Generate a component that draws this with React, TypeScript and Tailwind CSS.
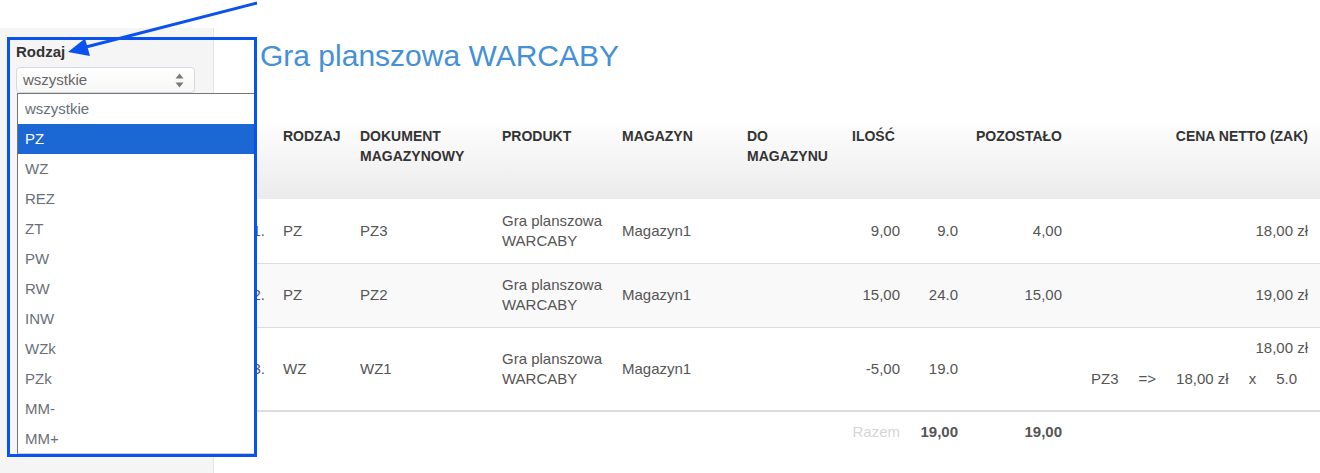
import React from "react";

const OPTIONS = ["wszystkie", "PZ", "WZ", "REZ", "ZT", "PW", "RW", "INW", "WZk", "PZk", "MM-", "MM+"];

function Th({ children, className = "", colSpan }: { children?: React.ReactNode; className?: string; colSpan?: number }) {
  return (
    <th
      colSpan={colSpan}
      className={
        "h-[82px] align-top pt-[9px] px-[8px] text-[14px] leading-[20px] font-bold text-[#333] uppercase bg-linear-to-b from-white to-[#ebebeb] " +
        className
      }
    >
      {children}
    </th>
  );
}

function Product() {
  return (
    <>
      Gra planszowa
      <br />
      WARCABY
    </>
  );
}

export default function App() {
  return (
    <div className="relative w-[1320px] h-[473px] overflow-hidden bg-white font-['Liberation_Sans',Arial,sans-serif]">
      <div className="flex flex-col h-full">
        <div className="h-[28px] shrink-0" />
        <div className="flex flex-1">
          {/* Sidebar */}
          <aside className="w-[214px] shrink-0 bg-[#f5f5f5] border-r border-[#e6e6e6] pt-[14px] px-[16px]">
            <div className="text-[15px] leading-[20px] font-bold text-[#333]">Rodzaj</div>
            <div className="mt-[5px] w-[179px] h-[26px] rounded-[4px] border border-[#d3dae2] bg-linear-to-b from-white to-[#f7f7f7] flex items-center justify-between pl-[6px] pr-[10px]">
              <span className="text-[15px] text-[#666]">wszystkie</span>
              <svg width="9" height="15" viewBox="0 0 9 15">
                <path d="M0.5 5.5 L4.5 0.5 L8.5 5.5 Z" fill="#7a7a7a" />
                <path d="M0.5 9.5 L4.5 14.5 L8.5 9.5 Z" fill="#7a7a7a" />
              </svg>
            </div>
          </aside>

          {/* Main */}
          <main className="flex-1 pt-[11px]">
            <h1 className="pl-[46px] text-[30px] leading-[33px] text-[#4590d6] font-normal">Gra planszowa WARCABY</h1>
            <table className="mt-[45px] w-full table-fixed border-collapse text-[15px] leading-[20px] text-[#555]">
              <colgroup>
                <col className="w-[61px]" />
                <col className="w-[77px]" />
                <col className="w-[142px]" />
                <col className="w-[120px]" />
                <col className="w-[125px]" />
                <col className="w-[105px]" />
                <col className="w-[64px]" />
                <col className="w-[58px]" />
                <col className="w-[104px]" />
                <col />
              </colgroup>
              <thead>
                <tr>
                  <Th className="text-right"></Th>
                  <Th className="text-left">Rodzaj</Th>
                  <Th className="text-left">
                    Dokument
                    <br />
                    magazynowy
                  </Th>
                  <Th className="text-left">Produkt</Th>
                  <Th className="text-left">Magazyn</Th>
                  <Th className="text-left">
                    Do
                    <br />
                    magazynu
                  </Th>
                  <Th className="text-left" colSpan={2}>
                    Ilość
                  </Th>
                  <Th className="text-right">Pozostało</Th>
                  <Th className="text-right pr-[12px]">Cena netto (zak)</Th>
                </tr>
              </thead>
              <tbody>
                <tr className="h-[64px] border-b border-[#dddddd]">
                  <td className="text-right pr-[10px]">1.</td>
                  <td className="px-[8px]">PZ</td>
                  <td className="px-[8px]">PZ3</td>
                  <td className="px-[8px]">
                    <Product />
                  </td>
                  <td className="px-[8px]">Magazyn1</td>
                  <td className="px-[8px]"></td>
                  <td className="px-[8px] text-right">9,00</td>
                  <td className="px-[8px] text-right">9.0</td>
                  <td className="px-[8px] text-right">4,00</td>
                  <td className="pl-[8px] pr-[12px] text-right">18,00 zł</td>
                </tr>
                <tr className="h-[64px] border-b border-[#dddddd] bg-[#f9f9f9]">
                  <td className="text-right pr-[10px]">2.</td>
                  <td className="px-[8px]">PZ</td>
                  <td className="px-[8px]">PZ2</td>
                  <td className="px-[8px]">
                    <Product />
                  </td>
                  <td className="px-[8px]">Magazyn1</td>
                  <td className="px-[8px]"></td>
                  <td className="px-[8px] text-right">15,00</td>
                  <td className="px-[8px] text-right">24.0</td>
                  <td className="px-[8px] text-right">15,00</td>
                  <td className="pl-[8px] pr-[12px] text-right">19,00 zł</td>
                </tr>
                <tr className="h-[84px] border-b-2 border-[#dddddd]">
                  <td className="text-right pr-[10px]">3.</td>
                  <td className="px-[8px]">WZ</td>
                  <td className="px-[8px]">WZ1</td>
                  <td className="px-[8px]">
                    <Product />
                  </td>
                  <td className="px-[8px]">Magazyn1</td>
                  <td className="px-[8px]"></td>
                  <td className="px-[8px] text-right">-5,00</td>
                  <td className="px-[8px] text-right">19.0</td>
                  <td className="px-[8px] text-right"></td>
                  <td className="pl-[8px] pr-[12px]">
                    <div className="text-right">18,00 zł</div>
                    <table className="ml-auto mr-[1px] border-collapse">
                      <tbody>
                        <tr>
                          <td className="px-[10px] py-[11px]">PZ3</td>
                          <td className="px-[10px] py-[11px]">=&gt;</td>
                          <td className="px-[10px] py-[11px]">18,00 zł</td>
                          <td className="px-[10px] py-[11px]">x</td>
                          <td className="px-[10px] py-[11px]">5.0</td>
                        </tr>
                      </tbody>
                    </table>
                  </td>
                </tr>
                <tr>
                  <td className="pt-[10px]"></td>
                  <td></td>
                  <td></td>
                  <td></td>
                  <td></td>
                  <td></td>
                  <td className="pt-[10px] px-[8px] text-right text-[#d6d6d6]">Razem</td>
                  <td className="pt-[10px] px-[8px] text-right font-bold">19,00</td>
                  <td className="pt-[10px] px-[8px] text-right font-bold">19,00</td>
                  <td></td>
                </tr>
              </tbody>
            </table>
          </main>
        </div>
      </div>

      {/* Open dropdown list */}
      <div className="absolute left-[17px] top-[93px] w-[237px] h-[361px] bg-white border-l border-t border-[#767676] border-b border-b-[#cccccc]">
        {OPTIONS.map((o, i) => (
          <div
            key={o}
            className={
              "h-[30px] leading-[30px] pl-[7px] text-[15px] " +
              (i === 1 ? "bg-[#1b67d3] text-white" : "text-[#6a6f78]")
            }
          >
            {o}
          </div>
        ))}
      </div>

      {/* Annotation box */}
      <div className="absolute left-[7px] top-[37px] w-[250px] h-[420px] border-[3px] border-[#0a52f0] pointer-events-none" />

      {/* Annotation arrow */}
      <svg className="absolute left-0 top-0 pointer-events-none" width="300" height="70" viewBox="0 0 300 70">
        <line x1="257" y1="3" x2="86" y2="47" stroke="#0a52f0" strokeWidth="3" />
        <polygon points="68,52 85,38.5 90,56" fill="#0a52f0" />
      </svg>
    </div>
  );
}
